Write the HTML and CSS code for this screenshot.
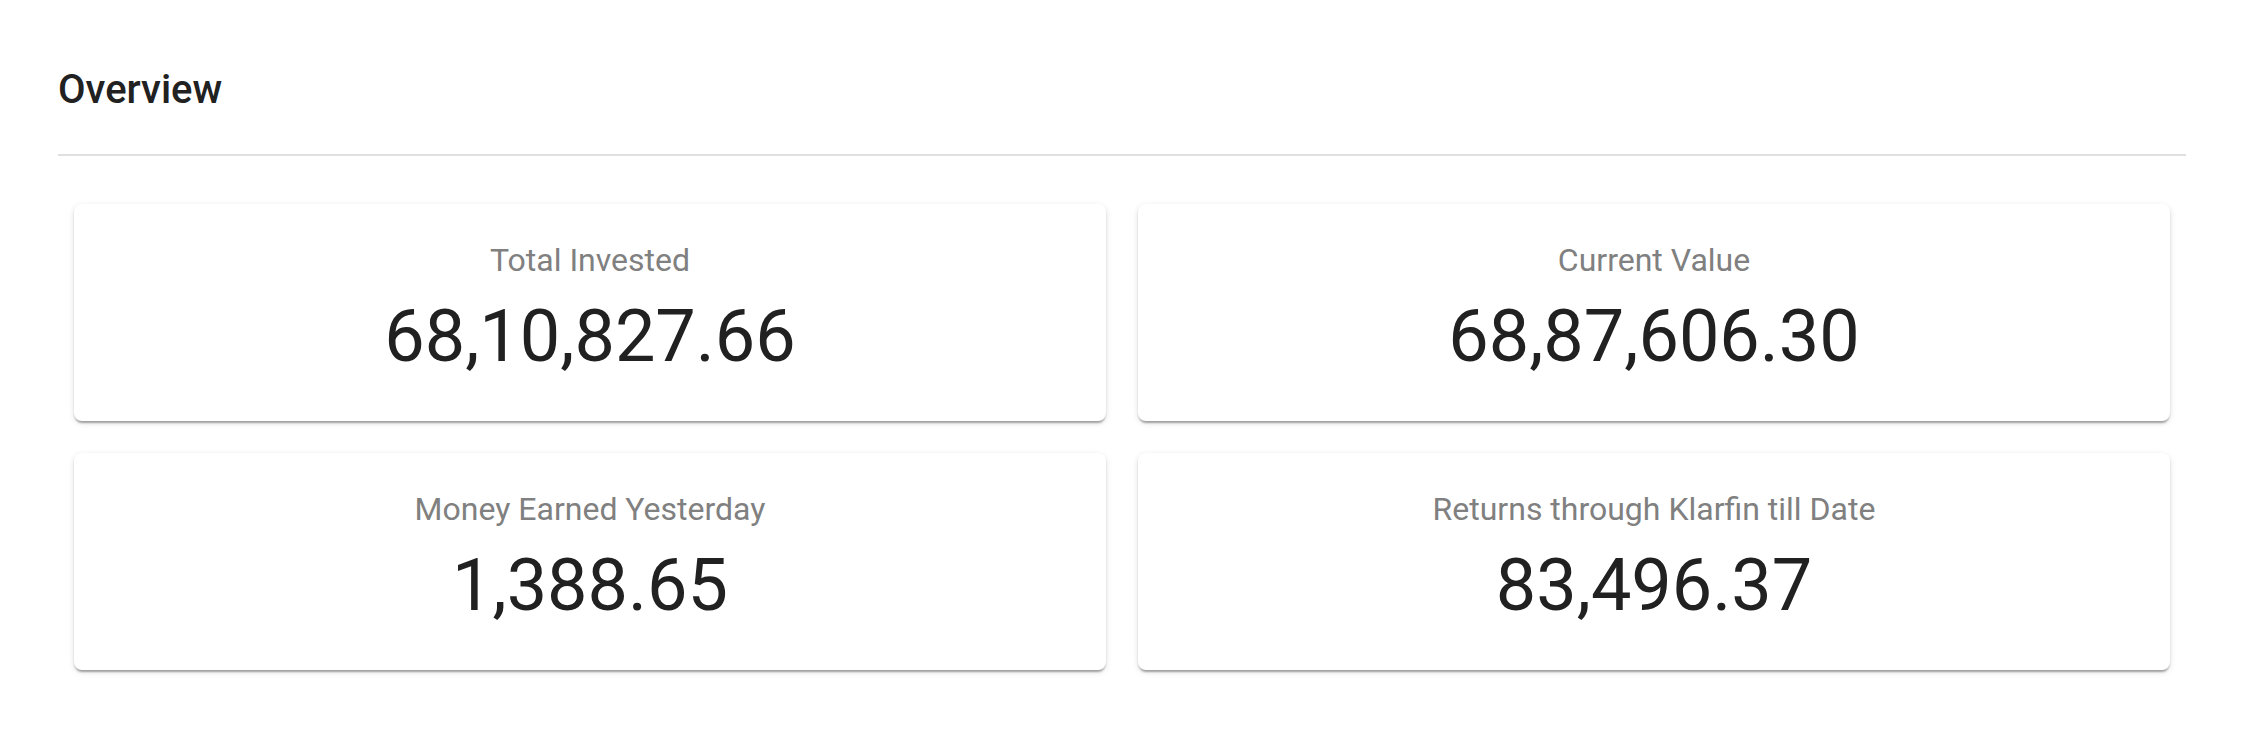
FILE: index.html
```html
<!DOCTYPE html>
<html lang="en">
<head>
<meta charset="utf-8">
<title>Overview</title>
<link rel="stylesheet" href="styles.css">
</head>
<body>
<section class="overview">
  <h2 class="overview-title">Overview</h2>
  <hr class="divider">
  <div class="grid">
    <div class="card">
      <div class="card-label">Total Invested</div>
      <div class="card-value">68,10,827.66</div>
    </div>
    <div class="card">
      <div class="card-label">Current Value</div>
      <div class="card-value">68,87,606.30</div>
    </div>
    <div class="card">
      <div class="card-label">Money Earned Yesterday</div>
      <div class="card-value">1,388.65</div>
    </div>
    <div class="card">
      <div class="card-label">Returns through Klarfin till Date</div>
      <div class="card-value">83,496.37</div>
    </div>
  </div>
</section>
</body>
</html>
```
FILE: styles.css
```css
html, body {
  margin: 0;
  padding: 0;
  background: #ffffff;
  font-family: Roboto, "Liberation Sans", Arial, sans-serif;
}

.overview {
  padding: 58px 60px 0 58px;
}

.overview-title {
  margin: 0;
  font-size: 40px;
  font-weight: 480;
  line-height: 64px;
  color: #212121;
}

.divider {
  margin: 32px 0 0 0;
  border: 0;
  height: 2px;
  background: #e0e0e0;
}

.grid {
  display: grid;
  grid-template-columns: 1fr 1fr;
  padding-top: 32px;
}

.card {
  margin: 16px;
  padding: 32px 0 42px;
  background: #ffffff;
  border-radius: 8px;
  box-shadow: 0 4px 2px -2px rgba(0, 0, 0, 0.2),
              0 2px 2px 0 rgba(0, 0, 0, 0.14),
              0 2px 6px 0 rgba(0, 0, 0, 0.12);
  text-align: center;
}

.card-label {
  margin-bottom: 10px;
  font-size: 32px;
  font-weight: 440;
  line-height: 48px;
  color: #808080;
}

.card-value {
  font-size: 72px;
  line-height: normal;
  color: #212121;
}
```
